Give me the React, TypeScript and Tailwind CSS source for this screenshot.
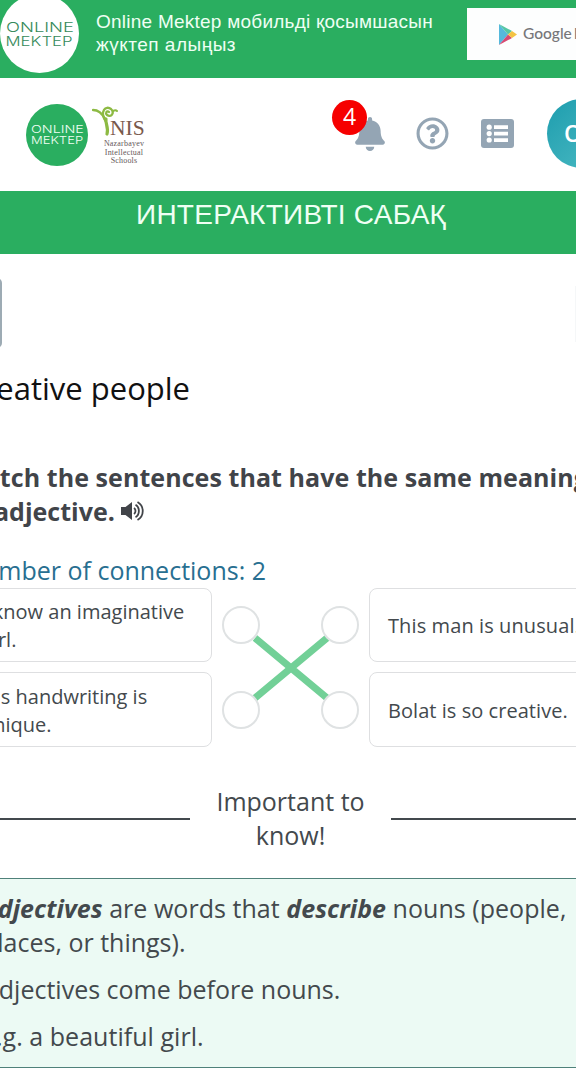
import type { ReactNode } from "react";
import { FaBell, FaRegQuestionCircle } from "react-icons/fa";

function Wordmark({ className }: { className: string }) {
  return (
    <div className={`flex shrink-0 flex-col items-center justify-center rounded-full font-['Inter',sans-serif] font-light ${className}`}>
      <span className="scale-x-[1.36]">ONLINE</span>
      <span className="scale-x-[1.24]">MEKTEP</span>
    </div>
  );
}

function Banner() {
  return (
    <div className="flex h-[78px] bg-[#2aae60] text-[#effff4]">
      <Wordmark className="-mt-[6px] h-[79px] w-[79px] bg-white text-[13.5px] leading-[14px] text-[#358a5b]" />
      <p className="ml-[17px] mt-[10px] w-[371px] shrink-0 whitespace-nowrap font-['Liberation_Sans',sans-serif] text-[19px] leading-[23px] tracking-[0.24px]">
        Online Mektep мобильді қосымшасын
        <br />
        <span className="tracking-[0.5px]">жүктеп алыңыз</span>
      </p>
      <div className="mt-2 flex h-[52px] w-[150px] shrink-0 items-center bg-[#fdfefe] pl-8">
        <svg viewBox="0 0 18 21" className="h-[21px] w-[18px] shrink-0">
          <path d="M0 0v21l9-10.5z" fill="#55b9dc" />
          <path d="M0 0l13 7-4 3.5z" fill="#55c6a4" />
          <path d="M0 21l13-7-4-3.5z" fill="#d64a72" />
          <path d="M13 7l5 3.5-5 3.5-4-3.5z" fill="#f4c343" />
        </svg>
        <span className="ml-1.5 whitespace-nowrap font-['Lato',sans-serif] text-[15.5px] font-medium text-[#77777a] [word-spacing:-2px]">Google Play</span>
      </div>
    </div>
  );
}

function NisLogo() {
  return (
    <div className="ml-1 flex w-[54px] flex-col pt-[28px]">
      <div className="flex h-[32px]">
        <svg viewBox="0 0 28 31" className="-mr-[10px] h-[31px] w-[28px] shrink-0" fill="none" stroke="#8dba43" strokeLinecap="round">
          <path d="M1 4c5 0 9 3 12 9" strokeWidth="2.4" />
          <path d="M14 16C7 5 14-1 19 3c4 4 0 9-4 6-2-2 0-5 2-3" strokeWidth="2.3" />
          <path d="M21 5c2-1 3-1 4 0" strokeWidth="2" />
          <path d="M15 28c2-6-2-11-1-15" strokeWidth="3.2" />
        </svg>
        <span className="mt-[10px] font-['Liberation_Serif',serif] text-[21.5px] leading-[24px] text-[#79594c]">NIS</span>
      </div>
      <p className="-mr-1 mt-[2px] w-[60px] pl-[4px] text-center font-['Liberation_Serif',serif] text-[8px] leading-[8.5px] tracking-[0.2px] text-[#65585a]">
        Nazarbayev
        <br />
        Intellectual
        <br />
        Schools
      </p>
    </div>
  );
}

function Header() {
  return (
    <header className="flex h-[113px] overflow-hidden bg-white">
      <Wordmark className="ml-[26px] mt-[26px] h-[62px] w-[62px] bg-[#2aae60] text-[10.5px] leading-[11px] text-[#effff4]" />
      <NisLogo />
      <div className="ml-auto flex shrink-0 items-start text-[#94a5b4]">
        <div className="relative mr-[31px] mt-[39px] h-[34px] w-[30px]">
          <FaBell className="h-[34px] w-[30px]" />
          <span className="absolute -left-[23px] -top-[17px] flex h-[35px] w-[35px] items-center justify-center rounded-full bg-[#f60000] pb-[3px] font-['Open_Sans',sans-serif] text-[23px] leading-none text-white">4</span>
        </div>
        <FaRegQuestionCircle className="mr-[32px] mt-[39px] h-[33px] w-[33px]" />
        <svg viewBox="0 0 33 29" className="mr-[33px] mt-[41px] h-[29px] w-[33px]">
          <rect width="33" height="29" rx="3" fill="currentColor" />
          <g fill="#fff">
            <circle cx="8.2" cy="8.2" r="2.6" />
            <circle cx="8.2" cy="14.6" r="2.6" />
            <circle cx="8.2" cy="21" r="2.6" />
            <path d="M13 6.3h14v3.6H13zM13 12.8h14v3.6H13zM13 19.3h14v3.6H13z" />
          </g>
        </svg>
        <div className="-mr-[40px] mt-[21px] flex h-[69px] w-[69px] items-center rounded-full bg-gradient-to-br from-[#1b9dae] to-[#4bbcc4] pl-[17px] font-['Open_Sans',sans-serif] text-[23px] font-semibold text-white">O</div>
      </div>
    </header>
  );
}

function Card({ className, children }: { className: string; children: ReactNode }) {
  return <div className={`flex shrink-0 items-center whitespace-nowrap rounded-lg border border-[#dedfe1] pt-[2px] text-[20px] leading-[28px] ${className}`}>{children}</div>;
}

function Port() {
  return <span className="h-[38px] w-[38px] rounded-full border-[2.5px] border-[#dfe2e3] bg-white" />;
}

function Matching() {
  return (
    <div className="mt-[1px] flex h-[159px]">
      <div className="-ml-5 flex w-[232px] shrink-0 flex-col gap-[10px]">
        <Card className="h-[74px] pl-[1px]">
          <p>
            I know an imaginative
            <br />
            girl.
          </p>
        </Card>
        <Card className="h-[75px]">
          <p>
            His handwriting is
            <br />
            unique.
          </p>
        </Card>
      </div>
      <div className="relative w-[157px] shrink-0">
        <svg viewBox="0 0 157 159" className="absolute inset-0 h-[159px] w-[157px]" stroke="#72d097" strokeWidth="7">
          <path d="M43 50l72 60M43 110l72-60" />
        </svg>
        <div className="relative grid grid-cols-2 gap-x-[61px] gap-y-[47px] pl-[10px] pr-[10px] pt-[18px]">
          <Port />
          <Port />
          <Port />
          <Port />
        </div>
      </div>
      <div className="flex w-[230px] shrink-0 flex-col gap-[10px]">
        <Card className="h-[74px] pl-[18px] tracking-[0.1px]">This man is unusual.</Card>
        <Card className="h-[75px] pl-[18px] tracking-[0.05px]">Bolat is so creative.</Card>
      </div>
    </div>
  );
}

function Speaker() {
  return (
    <svg viewBox="0 0 24 20" className="ml-[6px] h-[20px] w-[24px]" fill="none" stroke="#414449">
      <path d="M0 6h4.5L11 1v18l-6.5-5H0z" fill="#414449" stroke="none" />
      <path d="M13 7c2 1.500 2 4.500 0 6M14.500 3.800c4.500 2.500 4.500 9.900 0 12.400M16.500 1c7 4 7 14 0 18" strokeWidth="1.8" />
    </svg>
  );
}

export default function App() {
  return (
    <div className="h-[1080px] w-[576px] overflow-hidden bg-white font-['Open_Sans',sans-serif] text-[#43494d]">
      <Banner />
      <Header />
      <div className="h-[63px] whitespace-nowrap bg-[#2aae60] pl-[136px] pt-[8px] font-['Liberation_Sans',sans-serif] text-[28px] leading-[32px] tracking-[0.25px] text-[#effff4]">ИНТЕРАКТИВТІ САБАҚ</div>
      <div className="mt-[24px] flex h-[70px] justify-between">
        <span className="-ml-4 h-[70px] w-[18px] rounded-[5px] bg-[#9dabb4]" />
        <span className="mt-2 h-[56px] w-px bg-[#f5f7f8]" />
      </div>
      <h1 className="mt-[19px] flex h-[42px] w-[190px] items-center justify-end whitespace-nowrap text-[31px] text-[#111]">Creative people</h1>
      <div className="mt-[51px] whitespace-nowrap text-[25px] font-bold leading-[34px] text-[#414449]">
        <p className="-ml-[39px] tracking-[0.07px]">Match the sentences that have the same meaning</p>
        <div className="-ml-[6px] flex items-center">
          adjective.
          <Speaker />
        </div>
      </div>
      <p className="mt-[26px] flex h-[33px] w-[266px] items-center justify-end whitespace-nowrap text-[25px] text-[#286f91]">Number of connections: 2</p>
      <Matching />
      <div className="mt-[37px] flex h-[68px] items-center text-[25px] leading-[34px]">
        <span className="mt-[2px] h-[2px] w-[190px] bg-[#43494d]" />
        <p className="w-[201px] text-center">
          Important to
          <br />
          know!
        </p>
        <span className="mt-[2px] h-[2px] flex-1 bg-[#43494d]" />
      </div>
      <div className="mt-[26px] flex h-[190px] flex-col gap-[13px] whitespace-nowrap border-y border-[#4f817a] bg-[#ecfaf4] pt-[12px] text-[25px] leading-[34px]">
        <p>
          <span className="-ml-[18px] tracking-[0.04px]">
            <b className="italic">Adjectives</b> are words that <b className="italic">describe</b> nouns (people,
          </span>
          <br />
          <span className="-ml-[18px]">places, or things).</span>
        </p>
        <p className="-ml-[17px]">Adjectives come before nouns.</p>
        <p className="-ml-[18px] tracking-[0.04px]">E.g. a beautiful girl.</p>
      </div>
    </div>
  );
}
